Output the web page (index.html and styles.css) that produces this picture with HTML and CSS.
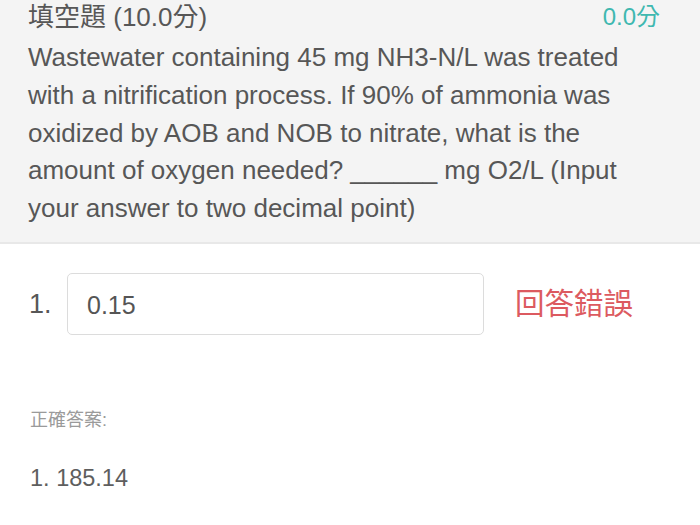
FILE: index.html
```html
<!DOCTYPE html>
<html lang="zh-Hant">
<head>
<meta charset="utf-8">
<title>填空題</title>
<link rel="stylesheet" href="styles.css">
</head>
<body>
<section class="question">
  <div class="q-head">
    <span class="q-type">填空題 (10.0分)</span>
    <span class="q-score">0.0分</span>
  </div>
  <p class="q-text">Wastewater containing 45 mg NH3-N/L was treated with a nitrification process. If 90% of ammonia was oxidized by AOB and NOB to nitrate, what is the amount of oxygen needed? ______ mg O2/L (Input your answer to two decimal point)</p>
</section>
<section class="answer">
  <div class="answer-row">
    <span class="num">1.</span>
    <div class="input">0.15</div>
    <span class="wrong">回答錯誤</span>
  </div>
</section>
<section class="correct">
  <div class="correct-label">正確答案:</div>
  <div class="correct-value">1. 185.14</div>
</section>
</body>
</html>
```
FILE: styles.css
```css
html, body {
  margin: 0;
  padding: 0;
  background: #ffffff;
}
body {
  font-family: "Liberation Sans", "Noto Sans CJK TC", sans-serif;
  color: #575757;
  width: 700px;
  height: 525px;
  overflow: hidden;
}
.question {
  background: #f4f4f4;
  border-bottom: 2px solid #e8e8e8;
  padding: 0 40px 14px 28px;
}
.q-head {
  display: flex;
  justify-content: space-between;
  align-items: center;
  height: 34px;
}
.q-type {
  font-size: 26px;
  line-height: 34px;
}
.q-score {
  font-size: 24px;
  line-height: 34px;
  color: #3fb8b0;
}
.q-text {
  margin: 5px 0 0;
  font-size: 26px;
  line-height: 37.75px;
}
.answer {
  padding: 29px 0 0 29px;
}
.answer-row {
  display: flex;
  align-items: center;
}
.num {
  width: 38px;
  font-size: 27px;
  line-height: 30px;
}
.input {
  box-sizing: border-box;
  width: 417px;
  height: 62px;
  border: 1px solid #dcdcdc;
  border-radius: 5px;
  background: #fff;
  padding: 4px 0 0 19px;
  display: flex;
  align-items: center;
  font-size: 25px;
  color: #555;
}
.wrong {
  margin-left: 31px;
  font-size: 29.5px;
  line-height: 34px;
  color: #dc5a60;
}
.correct {
  padding: 73px 0 0 30px;
}
.correct-label {
  font-size: 18px;
  line-height: 24px;
  color: #9a9a9a;
}
.correct-value {
  margin-top: 31px;
  font-size: 23.5px;
  line-height: 30px;
  color: #5e5e5e;
}
```
